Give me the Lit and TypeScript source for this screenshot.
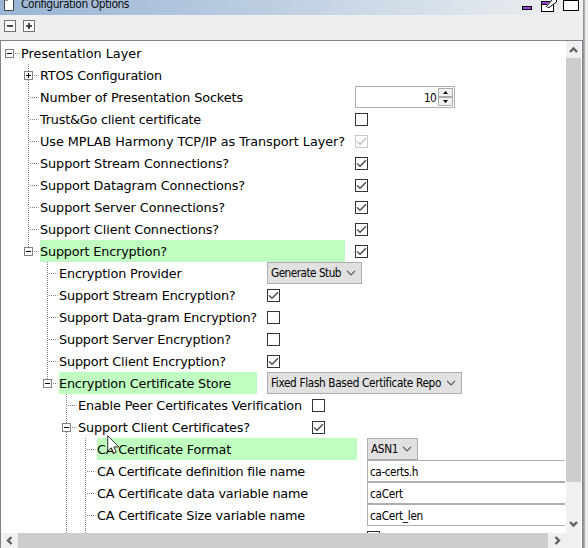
import { LitElement, html, css, svg, nothing } from "lit";

// Text run whose letter spacing is derived from the width it has to span.
class FitText extends LitElement {
  static properties = { text: { type: String }, span: { type: Number } };
  declare text: string;
  declare span: number;
  static styles = css`
    :host { display: inline-block; white-space: nowrap; }
  `;
  render() {
    return html`<span>${this.text}</span>`;
  }
  updated() {
    const s = this.renderRoot.querySelector("span")!;
    s.style.letterSpacing = "0px";
    const w = s.getBoundingClientRect().width;
    s.style.letterSpacing = (this.span - w) / this.text.length + "px";
  }
}
customElements.define("fit-text", FitText);

type Kind = "check" | "spin" | "combo" | "field";
interface Row {
  level: number;
  text: string;
  span: number;
  node?: "plus" | "minus";
  last?: boolean;
  mark?: boolean;
  label?: number;
  kind?: Kind;
  on?: boolean;
  off?: boolean;
  value?: string;
  vspan?: number;
  width?: number;
  through?: number[];
}

const rows: Row[] = [
  { level: 0, text: "Presentation Layer", span: 120.5, node: "minus" },
  { level: 1, text: "RTOS Configuration", span: 122, node: "plus" },
  { level: 1, text: "Number of Presentation Sockets", span: 203, kind: "spin", label: 305 },
  { level: 1, text: "Trust&Go client certificate", span: 161, kind: "check", label: 305 },
  { level: 1, text: "Use MPLAB Harmony TCP/IP as Transport Layer?", span: 305, kind: "check", on: true, off: true, label: 305 },
  { level: 1, text: "Support Stream Connections?", span: 189, kind: "check", on: true, label: 305 },
  { level: 1, text: "Support Datagram Connections?", span: 205, kind: "check", on: true, label: 305 },
  { level: 1, text: "Support Server Connections?", span: 185, kind: "check", on: true, label: 305 },
  { level: 1, text: "Support Client Connections?", span: 179, kind: "check", on: true, label: 305 },
  { level: 1, text: "Support Encryption?", span: 127, node: "minus", last: true, mark: true, kind: "check", on: true, label: 305 },
  { level: 2, text: "Encryption Provider", span: 122.5, kind: "combo", value: "Generate Stub", vspan: 70, width: 95, label: 198 },
  { level: 2, text: "Support Stream Encryption?", span: 176.5, kind: "check", on: true, label: 198 },
  { level: 2, text: "Support Data-gram Encryption?", span: 198, kind: "check", label: 198 },
  { level: 2, text: "Support Server Encryption?", span: 172, kind: "check", label: 198 },
  { level: 2, text: "Support Client Encryption?", span: 167, kind: "check", on: true, label: 198 },
  { level: 2, text: "Encryption Certificate Store", span: 172, node: "minus", last: true, mark: true, kind: "combo", value: "Fixed Flash Based Certificate Repo", vspan: 170, width: 195, label: 198 },
  { level: 3, text: "Enable Peer Certificates Verification", span: 224, kind: "check", label: 224 },
  { level: 3, text: "Support Client Certificates?", span: 172, node: "minus", kind: "check", on: true, label: 224 },
  { level: 4, text: "CA Certificate Format", span: 134, mark: true, kind: "combo", value: "ASN1", vspan: 27, width: 51, label: 260, through: [3] },
  { level: 4, text: "CA Certificate definition file name", span: 208, kind: "field", value: "ca-certs.h", vspan: 48, label: 260, through: [3] },
  { level: 4, text: "CA Certificate data variable name", span: 211, kind: "field", value: "caCert", vspan: 33, label: 260, through: [3] },
  { level: 4, text: "CA Certificate Size variable name", span: 208, kind: "field", value: "caCert_len", vspan: 53, label: 260, through: [3] },
  { level: 4, text: "", span: 0, kind: "check", label: 260, through: [3] },
];

const guides = (r: Row) => {
  const x = 9 + 19 * r.level - 0.5;
  return svg`
    ${(r.through ?? []).map((l) => svg`<path class="dots" d="M${9 + 19 * l - 0.5} 0V22"/>`)}
    ${r.level > 0 ? svg`<path class="dots" d="M${x} 0V${r.last ? 11 : 22}"/>` : nothing}
    ${r.text ? svg`<path class="dots" d="M${x + 1.5} 11.5H${x + 10}"/>` : nothing}
    ${r.node
      ? svg`<rect class="box" x="${x - 4}" y="7.5" width="8" height="8"/>
          <path class="sign" d="M${x - 2.5} 11.5h5"/>
          ${r.node === "plus" ? svg`<path class="sign" d="M${x} 9v5"/>` : nothing}`
      : nothing}`;
};

const chevron = html`<svg class="chev" width="10" height="6"><path d="M1 .8L5 4.8L9 .8"/></svg>`;

class AppRoot extends LitElement {
  static styles = css`
    :host { display: block; width: 588px; height: 548px; overflow: hidden; background: #efefef; font-family: "DejaVu Sans", sans-serif; color: #000; }
    * { box-sizing: border-box; }
    svg { display: block; flex: none; }
    .window { display: grid; grid-template-columns: 583px 5px; height: 548px; }
    .main { display: flex; flex-direction: column; height: 548px; min-width: 0; }
    .edge { background: linear-gradient(90deg, #979797 0 1px, #b4b4b4 1px 2px, #e0e0e0 2px 3px, #efefef 3px); }
    .title { height: 15px; display: flex; align-items: flex-start; background: linear-gradient(90deg, #9ab5d5, #b3c7de 35%, #dce4ec 80%, #efefef); flex: none; }
    .title .name { margin-left: 6px; font: 12px/9px "DejaVu Sans Condensed", "DejaVu Sans", sans-serif; color: #111; flex: 1; }
    .doc { margin-left: 4px; }
    .tools { height: 25px; display: flex; gap: 7px; padding: 5px 4px; flex: none; }
    .panel { flex: 1; min-height: 0; border: solid #7f828f; border-width: 1px 1px 0 1px; display: grid; grid-template: 492px 15px / 565px 15px; background: #fff; }
    .tree { overflow: hidden; padding-top: 1px; position: relative; }
    .row { display: flex; height: 22px; align-items: stretch; }
    .dots { stroke: #808080; stroke-dasharray: 1 1; fill: none; }
    .box { fill: #fff; stroke: #808080; }
    .sign { stroke: #000; }
    .label { font-size: 12.8px; line-height: 22px; height: 22px; padding-top: 1px; margin-right: 10px; flex: none; white-space: nowrap; }
    .mark { background: #bfffbf; }
    .check { margin-top: 5px; }
    .combo { display: flex; align-items: center; justify-content: space-between; padding: 0 5px 0 3px; border: 1px solid #adadb3; background: #e1e1e1; flex: none; }
    .small { font: 11.7px/20px "DejaVu Sans Condensed", "DejaVu Sans", sans-serif; }
    .chev path { fill: none; stroke: #555; stroke-width: 1.2; }
    .field { flex: 1; border: 1px solid #adadb3; border-right: 0; padding-left: 2px; background: #fff; margin-right: 1px; }
    .spin { width: 100px; border: 1px solid #adadb3; display: flex; justify-content: flex-end; gap: 2px; padding: 1px; }
    .vbar { background: #cdcdcd; display: flex; flex-direction: column; justify-content: space-between; }
    .hbar { background: #cdcdcd; display: flex; justify-content: space-between; }
    .corner { background: #f0f0f0; }
    .btn { background: #f0f0f0; }
    .btn path { fill: none; stroke: #606060; stroke-width: 2.4; }
    .cursor { position: absolute; left: 106px; top: 394px; }
  `;

  check(r: Row) {
    const c = r.off ? "#c8c8c8" : "#333";
    return svg`<svg class="check" width="13" height="13"><rect x=".5" y=".5" width="12" height="12" fill="#fff" stroke="${c}"/>
      ${r.on ? svg`<path d="M2 6.4L5 9.3L11 3.3" fill="none" stroke="${r.off ? "#bdbdbd" : "#444"}" stroke-width="1.3"/>` : nothing}</svg>`;
  }

  control(r: Row) {
    const value = html`<fit-text class="small" .text=${r.value ?? ""} .span=${r.vspan ?? 0}></fit-text>`;
    switch (r.kind) {
      case "check": return this.check(r);
      case "combo": return html`<div class="combo" style="width:${r.width}px">${value}${chevron}</div>`;
      case "field": return html`<div class="field">${value}</div>`;
      case "spin": return html`<div class="spin"><fit-text class="small" .text=${"10"} .span=${12}></fit-text>
        <svg width="15" height="18"><g fill="#f0f0f0" stroke="#adadad"><rect x=".5" y=".5" width="14" height="8"/><rect x=".5" y="9.5" width="14" height="8"/></g>
        <path d="M5 6L7.5 3L10 6ZM5 12L7.5 15L10 12Z"/></svg></div>`;
      default: return nothing;
    }
  }

  render() {
    return html`<div class="window">
      <div class="main">
        <div class="title">
          <svg class="doc" width="11" height="12"><path d="M.5 -1V10.500H9.500V-1" fill="#fff" stroke="#444"/><path d="M1 -1H4V1H1Z" fill="#999"/></svg>
          <fit-text class="name" .text=${"Configuration Options"} .span=${108}></fit-text>
          <svg width="67" height="15">
            <rect x="6.500" y="6.500" width="9" height="3" fill="#a040e0" stroke="#000"/>
            <rect x="25.500" y="1.500" width="12" height="10" fill="#fff" stroke="#000"/>
            <rect x="26" y="2" width="8" height="2" fill="#a040e0"/><path d="M26 4.500H32" stroke="#000"/>
            <path d="M29.500 7.500L31 5L36 -1H40.500V2L35 6.500L32 7.500Z" fill="#fff"/>
            <path d="M30 7L36 0M31.500 7.500H33L40.500 2V0" fill="none" stroke="#000"/>
            <rect x="47.500" y=".5" width="15" height="10" fill="#fff" stroke="#000"/>
          </svg>
        </div>
        <div class="tools">
          ${["minus", "plus"].map((k) => html`<svg width="12" height="12"><rect x=".5" y=".5" width="11" height="11" fill="#fff" stroke="#707070"/>
            <path d="M3 6H9${k === "plus" ? "M6 3V9" : ""}" stroke="#222" stroke-width="1.600"/></svg>`)}
        </div>
        <div class="panel">
          <div class="tree">
            ${rows.map((r) => html`<div class="row">
              <svg width="${20 + 19 * r.level}" height="22">${guides(r)}</svg>
              <div class="label ${r.mark ? "mark" : ""}" style="width:${r.label ?? 200}px">${r.text ? html`<fit-text .text=${r.text} .span=${r.span}></fit-text>` : nothing}</div>
              ${this.control(r)}
            </div>`)}
            <svg class="cursor" width="14" height="20"><path d="M.7 .8V16L4.300 12.800L6.800 18.300L9.300 17.200L6.900 11.900H11.800Z" fill="#fff" stroke="#333"/></svg>
          </div>
          <div class="vbar">
            <svg class="btn" width="15" height="17"><path d="M4 11L7.500 7.500L11 11"/></svg>
            <svg class="btn" width="15" height="51"><path d="M4 40L7.500 43.500L11 40"/></svg>
          </div>
          <div class="hbar">
            <svg class="btn" width="17" height="15"><path d="M10.500 4L7 7.500L10.500 11"/></svg>
            <svg class="btn" width="18" height="15"><path d="M7.500 4L11 7.500L7.500 11"/></svg>
          </div>
          <div class="corner"></div>
        </div>
      </div>
      <div class="edge"></div>
    </div>`;
  }
}
customElements.define("app-root", AppRoot);
